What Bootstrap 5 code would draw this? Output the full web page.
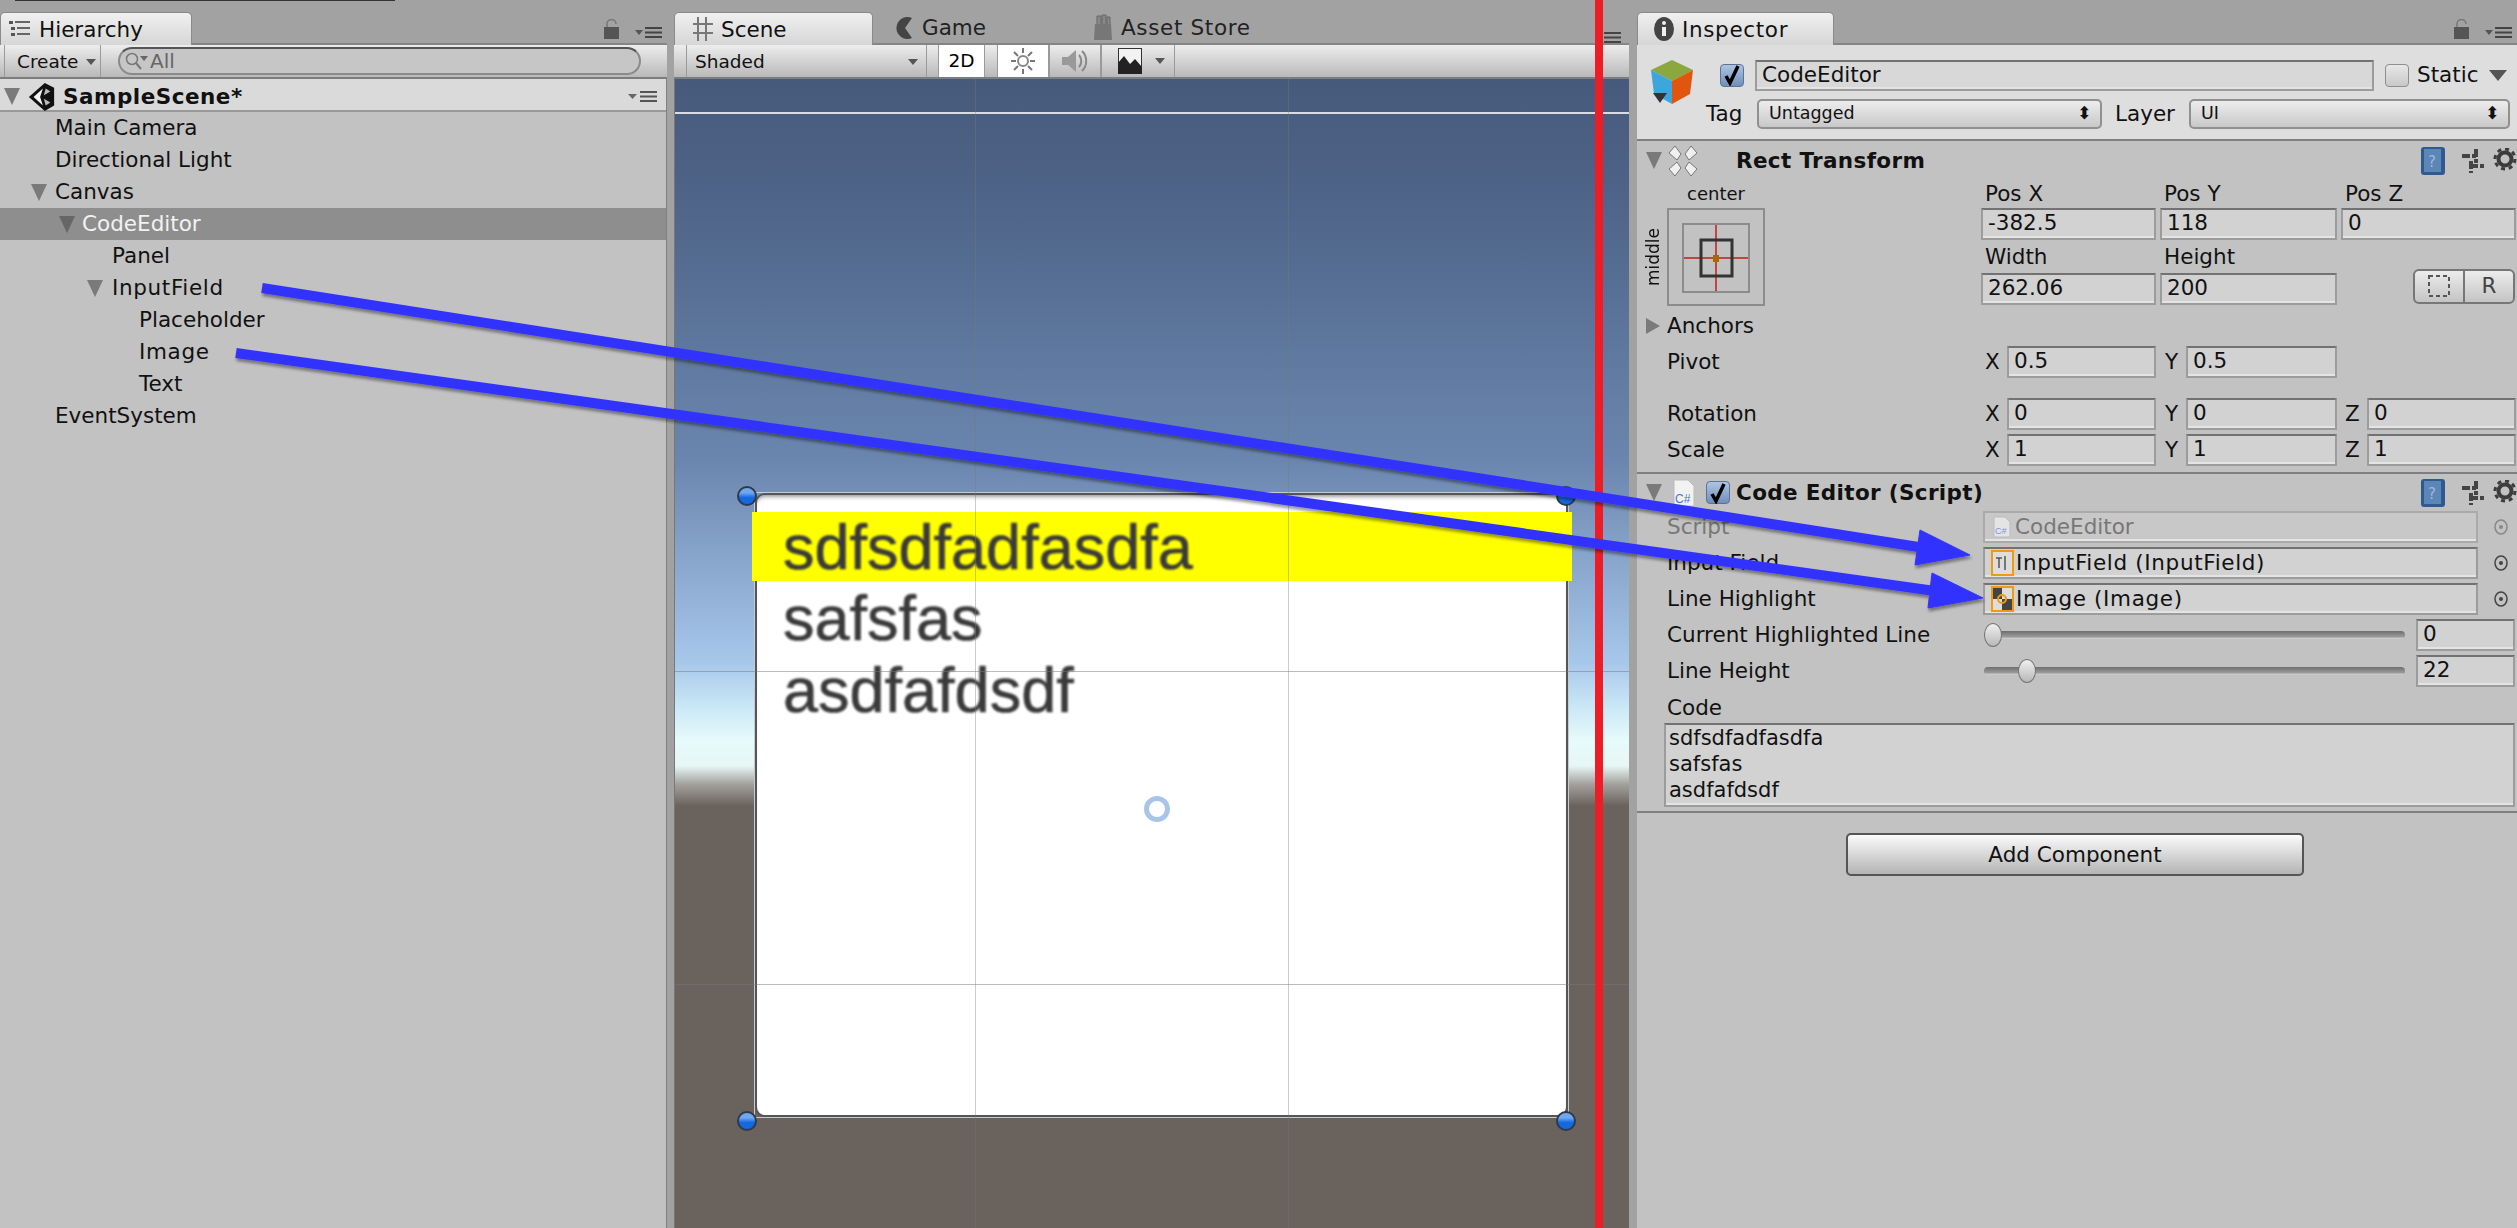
<!DOCTYPE html>
<html lang="en">
<head>
  <meta charset="UTF-8">
  <title>Unity Editor</title>
  <link href="https://cdn.jsdelivr.net/npm/bootstrap@5.3.0/dist/css/bootstrap.min.css" rel="stylesheet">
  <style>
    html, body { margin: 0; width: 2517px; height: 1228px; overflow: hidden; }
    body { background: #a2a2a2; font-family: "DejaVu Sans", Verdana, sans-serif; font-size: 21.5px; color: #111; position: relative; }
    svg { display: block; flex: none; }

    .editor { width: 2517px; height: 1228px; }
    .dock-left { width: 667px; }
    .dock-mid { width: 955px; margin-left: 7px; }
    .dock-right { width: 880px; margin-left: 8px; }
    .dock-left, .dock-mid, .dock-right { height: 1228px; }

    .tab-strip { height: 45px; padding-top: 12px; border-bottom: 2px solid #858585; }
    .dock-tab { height: 33px; background: linear-gradient(#f0f0f0, #d6d6d6); border: 1px solid #8a8a8a; border-bottom: 0; border-radius: 5px 5px 0 0; line-height: 31px; }
    .dock-tab-off { height: 32px; line-height: 32px; color: #222; }

    .tool-bar { height: 34px; background: linear-gradient(#ededed, #b9b9b9); border-bottom: 2px solid #7d7d7d; }
    .tool-cell { height: 32px; padding-top: 2px; border-left: 1px solid #9a9a9a; border-right: 1px solid #9a9a9a; line-height: 28px; font-size: 18.5px; }
    .tool-white { background: #fff; }
    .drop-mark { width: 0; height: 0; border-left: 5px solid transparent; border-right: 5px solid transparent; border-top: 6px solid #555; }

    .hier-panel { background: #c2c2c2; height: 1149px; border-right: 1px solid #808080; }
    .search-pill { width: 523px; height: 28px; margin: 2px 0 0 17px; border: 2px solid #8a8a8a; border-top-color: #555; border-radius: 14px; background: #c6c6c6; color: #666; line-height: 22px; font-size: 20px; }
    .scene-head { height: 33px; padding-top: 4px; background: #dadada; border-bottom: 2px solid #999; font-weight: 700; letter-spacing: .5px; line-height: 28px; }
    .hier-row { height: 32px; line-height: 32px; color: #111; white-space: nowrap; }
    .hier-on { background: #8e8e8e; color: #f2f2f2; }
    .fold-down { width: 0; height: 0; border-left: 8px solid transparent; border-right: 8px solid transparent; border-top: 17px solid #7a7a7a; flex: none; }
    .fold-right { width: 0; height: 0; border-top: 8px solid transparent; border-bottom: 8px solid transparent; border-left: 14px solid #7a7a7a; flex: none; }
    .ind-0 { padding-left: 55px; }
    .ind-1 { padding-left: 31px; }
    .ind-2 { padding-left: 59px; }
    .ind-3 { padding-left: 112px; }
    .ind-4 { padding-left: 87px; }
    .ind-5 { padding-left: 139px; }
    .wide-i { letter-spacing: .65px; }

    .scene-view { height: 1149px; position: relative; overflow: hidden; border-left: 1px solid #777;
      background: linear-gradient(180deg, #465a7b 0, #4e6488 120px, #6b86ae 382px, #a6c6ea 582px, #cdeaf7 632px, #e6fbfb 662px, #e6f6f4 687px, #a4a29e 705px, #6a625c 727px, #6a625c 100%); }
    .grid-h { position: absolute; left: 0; right: 0; height: 1px; background: rgba(120,120,120,.5); z-index: 2; }
    .grid-v { position: absolute; top: 0; bottom: 0; width: 1px; background: rgba(120,120,120,.38); z-index: 2; }
    .horizon-line { position: absolute; left: 0; right: 0; top: 33px; height: 2px; background: #d8dde4; }
    .ui-panel { position: absolute; left: 79px; top: 413px; width: 815px; height: 626px; border: 1px solid #c8ccd0; }
    .ui-panel-in { height: 100%; background: #fff; border: 2px solid #555; border-radius: 10px; padding-top: 17px; box-shadow: inset 0 5px 5px -4px #777; }
    .code-hi { height: 69px; margin: 0 -6px 0 -5px; padding-left: 31px; background: #ff0; line-height: 70px; }
    .code-line { height: 72px; padding-left: 26px; line-height: 74px; }
    .code-hi, .code-line { font-family: "Liberation Sans", Arial, sans-serif; font-size: 63px; color: #3a3a3a; }
    .soft-text { display: inline-block; filter: blur(1px); -webkit-text-stroke: .6px #3a3a3a; }
    .rect-handle { position: absolute; width: 20px; height: 20px; border-radius: 50%; background: linear-gradient(#6ea8f0 30%, #1468e0 60%); border: 2px solid #2e3a4a; z-index: 3; }
    .caret-ring { position: absolute; left: 469px; top: 717px; width: 26px; height: 26px; border: 5px solid #a8c4e8; border-radius: 50%; z-index: 3; filter: blur(.5px); }

    .insp-head { height: 96px; background: #dedede; border-bottom: 2px solid #7f7f7f; padding: 15px 0 0 13px; }
    .insp-body { background: #c2c2c2; height: 1087px; }
    .u-field { height: 32px; background: #d2d2d2; border: 2px solid #9c9c9c; border-top-color: #727272; box-shadow: inset 0 -2px 0 #e4e4e4; line-height: 26px; padding-left: 5px; color: #111; white-space: nowrap; overflow: hidden; }
    .u-popup { height: 30px; background: linear-gradient(#ededed, #c8c8c8); border: 2px solid #909090; border-radius: 5px; line-height: 25px; padding-left: 10px; font-size: 17.5px; }
    .u-check { width: 24px; height: 23px; border: 1px solid #8f8f8f; border-radius: 4px; background: linear-gradient(#e8e8e8, #c8c8c8); flex: none; }
    .u-check-on { background: linear-gradient(#b0c4e0, #6f8fbb); border-color: #5b7396; }
    .comp-title { font-weight: 700; letter-spacing: .35px; line-height: 37px; }
    .comp-end { border-bottom: 2px solid #7f7f7f; }
    .rect-block { height: 333px; }
    .left-label { width: 344px; padding-left: 30px; }
    .w-175 { width: 175px; }
    .w-177 { width: 177px; }
    .w-149 { width: 149px; }
    .w-151 { width: 151px; }
    .axis { width: 26px; padding-left: 4px; }
    .field-row { height: 32px; line-height: 32px; }
    .cap-row { height: 33px; line-height: 33px; }
    .anchor-box { width: 98px; height: 98px; border: 2px solid #8c8c8c; padding: 13px; }
    .anchor-in { width: 68px; height: 70px; border: 2px solid #8c8c8c; }
    .anchor-cap { width: 98px; height: 28px; line-height: 28px; font-size: 18px; text-align: center; }
    .side-word { writing-mode: vertical-rl; transform: rotate(180deg); font-size: 17px; width: 22px; margin-left: -25px; margin-right: 3px; text-align: center; line-height: 22px; }
    .mini-btn { width: 51px; height: 35px; background: linear-gradient(#ececec, #c4c4c4); border: 2px solid #777; line-height: 30px; text-align: center; color: #444; }
    .obj-row { height: 32px; line-height: 32px; margin-bottom: 4px; }
    .ghost { color: #777; }
    .slide-wrap { width: 421px; margin-right: 11px; position: relative; height: 32px; }
    .slide-track { position: absolute; left: 0; right: 0; top: 12px; height: 8px; background: linear-gradient(#6e6e6e, #999 70%, #d8d8d8); border-radius: 4px; }
    .slide-thumb { position: absolute; top: 4px; width: 18px; height: 24px; background: linear-gradient(#f0f0f0, #b8b8b8); border: 1px solid #777; border-radius: 50%; }
    .thumb-a { left: 0; }
    .thumb-b { left: 34px; }
    .code-cap { padding-left: 30px; height: 32px; line-height: 34px; }
    .code-area { height: 84px; margin: 0 2px 0 27px; background: #d2d2d2; border: 2px solid #9c9c9c; border-top-color: #727272; box-shadow: inset 0 -2px 0 #e4e4e4; padding: 0 3px; line-height: 26px; font-size: 21px; }
    .add-wrap { padding-top: 20px; padding-left: 209px; }
    .btn.add-btn { width: 458px; height: 43px; padding: 0; border: 2px solid #555; border-radius: 5px; background: linear-gradient(#fbfbfb, #b4b4b4); color: #111; font-size: 21.5px; line-height: 38px; }

    .paint-layer { position: absolute; left: 0; top: 0; z-index: 10; pointer-events: none; }
  </style>
</head>
<body>
  <div class="editor d-flex">

    <!-- hierarchy -->
    <div class="dock-left">
      <div class="tab-strip d-flex justify-content-between">
        <div class="dock-tab d-flex align-items-center gap-2 ps-2" style="width:192px">
          <svg width="22" height="18" viewBox="0 0 22 18"><g fill="#555"><rect x="0" y="1" width="4" height="3"/><rect x="2" y="7" width="4" height="3"/><rect x="2" y="13" width="4" height="3"/></g><g fill="#666"><rect x="6" y="1" width="15" height="2"/><rect x="8" y="7" width="13" height="2"/><rect x="8" y="13" width="13" height="2"/></g></svg>
          <span>Hierarchy</span>
        </div>
        <div class="d-flex align-items-end gap-3 pe-1 pb-1">
          <svg width="15" height="20" viewBox="0 0 15 20"><path d="M3 9V5a4.500 4.500 0 0 1 9 0" fill="none" stroke="#777" stroke-width="1.500"/><rect x="0" y="8" width="15" height="12" fill="#555"/></svg>
          <svg width="28" height="12" viewBox="0 0 28 12"><path d="M0 3h8l-4 5z" fill="#555"/><path d="M10 1h17M10 5.500h17M10 10h17" stroke="#444" stroke-width="2"/></svg>
        </div>
      </div>
      <div class="tool-bar d-flex">
        <div class="tool-cell d-flex align-items-center gap-2 ms-1" style="width:97px;padding-left:12px">Create <span class="drop-mark"></span></div>
        <div class="search-pill d-flex align-items-center ps-1">
          <svg width="26" height="22" viewBox="0 0 26 22"><circle cx="8" cy="9" r="5.500" fill="none" stroke="#777" stroke-width="1.500"/><path d="M12 13l5 6" stroke="#777" stroke-width="2"/><path d="M16 6h8l-4 5z" fill="#666"/></svg>
          <span>All</span>
        </div>
      </div>
      <div class="hier-panel">
        <div class="scene-head d-flex align-items-center ps-1">
          <span class="fold-down me-2"></span>
          <svg class="me-2" width="27" height="28" viewBox="0 0 27 30"><path d="M17 0l10 5v19l-10 6L0 15z" fill="#111"/><path d="M5 15L15 6l-3 9 3 9z" fill="#f4f4f4"/><path d="M18 6l5 3-7 4zM18 24l5-3-7-4z" fill="#bcbcbc"/></svg>
          <span class="flex-grow-1">SampleScene*</span>
          <svg class="me-2" width="30" height="12" viewBox="0 0 30 12"><path d="M0 3h9l-4.500 5z" fill="#666"/><path d="M12 1h17M12 5.500h17M12 10h17" stroke="#555" stroke-width="2"/></svg>
        </div>
        <div class="hier-row ind-0">Main Camera</div>
        <div class="hier-row ind-0">Directional Light</div>
        <div class="hier-row ind-1 d-flex align-items-center gap-1"><span class="fold-down me-1"></span><span>Canvas</span></div>
        <div class="hier-row hier-on ind-2 d-flex align-items-center"><span class="fold-down" style="margin-right:7px;border-top-color:#666"></span><span>CodeEditor</span></div>
        <div class="hier-row ind-3">Panel</div>
        <div class="hier-row ind-4 d-flex align-items-center"><span class="fold-down" style="margin-right:9px"></span><span class="wide-i">InputField</span></div>
        <div class="hier-row ind-5">Placeholder</div>
        <div class="hier-row ind-5 wide-i">Image</div>
        <div class="hier-row ind-5">Text</div>
        <div class="hier-row ind-0">EventSystem</div>
      </div>
    </div>

    <!-- scene -->
    <div class="dock-mid">
      <div class="tab-strip d-flex align-items-start">
        <div class="dock-tab d-flex align-items-center" style="width:199px;padding-left:17px;gap:7px">
          <svg width="22" height="26" viewBox="0 0 22 26"><path d="M6 1v24M14 1v24M1 8h20M1 17h20" stroke="#777" stroke-width="2"/></svg>
          <span>Scene</span>
        </div>
        <div class="dock-tab-off d-flex align-items-center gap-2" style="margin-left:23px;width:197px">
          <svg width="18" height="26" viewBox="0 0 18 26"><path d="M16 3a11 11 0 1 0 0 20l-7-10z" fill="#444"/></svg>
          <span>Game</span>
        </div>
        <div class="dock-tab-off d-flex align-items-center gap-2">
          <svg width="20" height="28" viewBox="0 0 20 28"><path d="M2 10h16l1 16H1z" fill="#777"/><path d="M4 10V2h4v8M9 10V1h4v9M14 10V3h3v7" fill="#888" stroke="#666"/></svg>
          <span class="wide-i">Asset Store</span>
        </div>
        <svg class="ms-auto" style="margin:20px 7px 0 0" width="18" height="12" viewBox="0 0 18 12"><path d="M0 1h17M0 5.500h17M0 10h17" stroke="#444" stroke-width="2"/></svg>
      </div>
      <div class="tool-bar d-flex">
        <div class="tool-cell d-flex align-items-center justify-content-between px-2" style="width:241px;margin-left:12px"><span>Shaded</span><span class="drop-mark"></span></div>
        <div class="tool-cell tool-white text-center text-black" style="width:47px;margin-left:11px">2D</div>
        <div class="tool-cell tool-white d-flex align-items-center justify-content-center" style="width:52px;margin-left:12px;padding-top:0">
          <svg width="26" height="28" viewBox="0 0 26 28"><circle cx="13" cy="14" r="5" fill="none" stroke="#888" stroke-width="2"/><path d="M13 1v5M13 22v5M1 14h5M20 14h5M4 5l4 4M18 19l4 4M22 5l-4 4M8 19l-4 4" stroke="#777" stroke-width="2"/></svg>
        </div>
        <div class="tool-cell d-flex align-items-center justify-content-center" style="width:52px;padding-top:0">
          <svg width="28" height="28" viewBox="0 0 28 28"><path d="M1 10h6l8-7v22l-8-7H1z" fill="#999"/><path d="M18 8a9 9 0 0 1 0 12M21 4a14 14 0 0 1 0 20" fill="none" stroke="#888" stroke-width="2"/></svg>
        </div>
        <div class="tool-cell d-flex align-items-center ps-3" style="width:74px;padding-top:0">
          <svg width="24" height="26" viewBox="0 0 24 26"><rect width="24" height="26" fill="#f2f2f2" stroke="#333" stroke-width="2"/><path d="M0 26V15l6-7 6 8 5-5 7 8v7z" fill="#222"/></svg>
          <span class="drop-mark" style="margin-left:13px"></span>
        </div>
      </div>
      <div class="scene-view">
        <div class="horizon-line"></div>
        <div class="grid-v" style="left:300px"></div>
        <div class="grid-v" style="left:613px"></div>
        <div class="grid-h" style="top:592px"></div>
        <div class="grid-h" style="top:905px"></div>
        <div class="ui-panel">
          <div class="ui-panel-in">
            <div class="code-hi"><span class="soft-text">sdfsdfadfasdfa</span></div>
            <div class="code-line"><span class="soft-text">safsfas</span></div>
            <div class="code-line"><span class="soft-text">asdfafdsdf</span></div>
          </div>
        </div>
        <span class="rect-handle" style="left:62px;top:407px"></span>
        <span class="rect-handle" style="left:881px;top:407px"></span>
        <span class="rect-handle" style="left:62px;top:1032px"></span>
        <span class="rect-handle" style="left:881px;top:1032px"></span>
        <span class="caret-ring"></span>
      </div>
    </div>

    <!-- inspector -->
    <div class="dock-right">
      <div class="tab-strip d-flex justify-content-between">
        <div class="dock-tab d-flex align-items-center gap-2 ps-3" style="width:197px">
          <svg width="20" height="24" viewBox="0 0 20 24"><ellipse cx="10" cy="12" rx="10" ry="12" fill="#444"/><circle cx="10" cy="6" r="2" fill="#eee"/><rect x="8" y="10" width="4" height="9" fill="#eee"/></svg>
          <span class="wide-i">Inspector</span>
        </div>
        <div class="d-flex align-items-end gap-3 pe-1 pb-1">
          <svg width="15" height="20" viewBox="0 0 15 20"><path d="M3 9V5a4.500 4.500 0 0 1 9 0" fill="none" stroke="#777" stroke-width="1.500"/><rect x="0" y="8" width="15" height="12" fill="#555"/></svg>
          <svg width="28" height="12" viewBox="0 0 28 12"><path d="M0 3h8l-4 5z" fill="#555"/><path d="M10 1h17M10 5.500h17M10 10h17" stroke="#444" stroke-width="2"/></svg>
        </div>
      </div>
      <div class="insp-head d-flex">
        <svg width="44" height="44" viewBox="0 0 44 44" class="me-4"><path d="M22 0l21 10-21 11L1 10z" fill="#8aa83e"/><path d="M1 10l21 11v23L4 34z" fill="#3ea6dc"/><path d="M43 10L22 21v23l18-10z" fill="#e0560e"/><path d="M3 33h14l-7 10z" fill="#333"/></svg>
        <div class="flex-grow-1">
          <div class="d-flex align-items-center" style="height:30px">
            <span class="u-check u-check-on d-flex align-items-center justify-content-center" style="margin-left:2px">
              <svg width="18" height="22" viewBox="0 0 18 22"><path d="M3 12l4 7L15 2" fill="none" stroke="#000" stroke-width="3.500"/></svg>
            </span>
            <div class="u-field" style="width:619px;height:31px;margin-left:11px;background:#d8d8d8">CodeEditor</div>
            <span class="u-check" style="margin-left:11px"></span>
            <span class="ms-2">Static</span>
            <span style="margin-left:11px;width:0;height:0;border-left:9px solid transparent;border-right:9px solid transparent;border-top:11px solid #555"></span>
          </div>
          <div class="d-flex align-items-center" style="margin-top:9px;height:30px">
            <span style="margin-left:-12px;width:42px">Tag</span>
            <div class="u-popup d-flex justify-content-between" style="width:345px;margin-left:9px"><span>Untagged</span><span class="pe-2">⬍</span></div>
            <span style="margin-left:13px;width:60px">Layer</span>
            <div class="u-popup d-flex justify-content-between" style="width:321px;margin-left:14px"><span>UI</span><span class="pe-2">⬍</span></div>
          </div>
        </div>
      </div>

      <div class="insp-body">
        <div class="rect-block comp-end">
          <div class="d-flex align-items-center" style="height:39px;padding-left:9px">
            <span class="fold-down" style="margin-right:4px"></span>
            <svg width="34" height="32" viewBox="0 0 34 32"><g fill="#f0f0f0" stroke="#777"><path d="M9 1l6 8-4 6-8-7z"/><path d="M25 1l-6 8 4 6 8-7z"/><path d="M9 31l6-8-4-6-8 7z"/><path d="M25 31l-6-8 4-6 8 7z"/></g></svg>
            <span class="comp-title flex-grow-1" style="margin-left:36px">Rect Transform</span>
            <svg class="me-2" width="26" height="30" viewBox="0 0 26 30"><rect x="1" y="1" width="24" height="28" rx="3" fill="#2f5a90"/><rect x="4" y="3" width="17" height="23" fill="#5d86b8"/><text x="8" y="21" font-size="15" fill="#9db8d8">?</text></svg>
            <svg class="ms-2" width="22" height="26" viewBox="0 0 22 26"><path d="M0 8h14M8 18h14M14 1v14M9 13v12" stroke="#444" stroke-width="4" stroke-dasharray="8 2"/></svg>
            <svg class="ms-2" width="25" height="26" viewBox="0 0 25 26"><circle cx="13" cy="11" r="6.500" fill="none" stroke="#3c3c3c" stroke-width="4"/><circle cx="13" cy="11" r="10" fill="none" stroke="#3c3c3c" stroke-width="3" stroke-dasharray="4 3.800"/></svg>
          </div>
          <div class="d-flex">
            <div class="left-label">
              <div class="anchor-cap">center</div>
              <div class="d-flex align-items-center">
                <span class="side-word">middle</span>
                <div class="anchor-box">
                  <div class="anchor-in">
                    <svg width="64" height="66" viewBox="0 0 64 66"><path d="M32 0v66M0 33h64" stroke="#c04545" stroke-width="2"/><rect x="17" y="15" width="31" height="36" fill="none" stroke="#333" stroke-width="3"/><rect x="29" y="30" width="6" height="7" fill="#a86a00"/></svg>
                  </div>
                </div>
              </div>
            </div>
            <div>
              <div class="d-flex" style="height:28px;line-height:28px"><span class="w-175 ps-1" style="margin-right:4px">Pos X</span><span class="w-177 ps-1" style="margin-right:4px">Pos Y</span><span class="ps-1">Pos Z</span></div>
              <div class="d-flex gap-1 field-row"><div class="u-field w-175">-382.5</div><div class="u-field w-177">118</div><div class="u-field w-175">0</div></div>
              <div class="d-flex cap-row"><span class="w-175 ps-1" style="margin-right:4px">Width</span><span class="w-177 ps-1">Height</span></div>
              <div class="d-flex gap-1 field-row">
                <div class="u-field w-175">262.06</div><div class="u-field w-177">200</div>
                <div class="d-flex" style="margin:-4px 0 0 72px;width:102px"><span class="mini-btn" style="border-radius:6px 0 0 6px;border-right-width:1px">
                  <svg class="m-auto mt-1" width="22" height="22" viewBox="0 0 22 22"><rect x="1" y="1" width="20" height="20" fill="none" stroke="#555" stroke-width="2" stroke-dasharray="4 3"/></svg></span><span class="mini-btn" style="border-radius:0 6px 6px 0;border-left-width:1px">R</span></div>
              </div>
            </div>
          </div>
          <div class="d-flex align-items-center" style="height:30px;margin-top:5px;padding-left:9px"><span class="fold-right" style="margin-right:7px"></span><span>Anchors</span></div>
          <div class="d-flex field-row" style="margin-top:5px">
            <span class="left-label">Pivot</span><span class="axis">X</span><div class="u-field w-149">0.5</div><span class="axis" style="width:30px;padding-left:9px">Y</span><div class="u-field w-151">0.5</div>
          </div>
          <div class="d-flex field-row" style="margin-top:20px">
            <span class="left-label">Rotation</span><span class="axis">X</span><div class="u-field w-149">0</div><span class="axis" style="width:30px;padding-left:9px">Y</span><div class="u-field w-151">0</div><span class="axis" style="width:30px;padding-left:8px">Z</span><div class="u-field w-149">0</div>
          </div>
          <div class="d-flex field-row" style="margin-top:4px">
            <span class="left-label">Scale</span><span class="axis">X</span><div class="u-field w-149">1</div><span class="axis" style="width:30px;padding-left:9px">Y</span><div class="u-field w-151">1</div><span class="axis" style="width:30px;padding-left:8px">Z</span><div class="u-field w-149">1</div>
          </div>
        </div>

        <div class="comp-end" style="height:339px">
          <div class="d-flex align-items-center" style="height:37px;padding-left:9px">
            <span class="fold-down" style="margin-right:11px"></span>
            <svg width="22" height="28" viewBox="0 0 22 28"><path d="M1 1h14l6 6v20H1z" fill="#f2f2f2" stroke="#bbb"/><text x="2" y="24" font-size="12" fill="#4477cc" font-family="Liberation Sans, sans-serif">C#</text></svg>
            <span class="u-check u-check-on d-flex align-items-center justify-content-center" style="margin-left:11px;margin-right:6px">
              <svg width="18" height="22" viewBox="0 0 18 22"><path d="M3 12l4 7L15 2" fill="none" stroke="#000" stroke-width="3.500"/></svg>
            </span>
            <span class="comp-title flex-grow-1">Code Editor (Script)</span>
            <svg class="me-2" width="26" height="30" viewBox="0 0 26 30"><rect x="1" y="1" width="24" height="28" rx="3" fill="#2f5a90"/><rect x="4" y="3" width="17" height="23" fill="#5d86b8"/><text x="8" y="21" font-size="15" fill="#9db8d8">?</text></svg>
            <svg class="ms-2" width="22" height="26" viewBox="0 0 22 26"><path d="M0 8h14M8 18h14M14 1v14M9 13v12" stroke="#444" stroke-width="4" stroke-dasharray="8 2"/></svg>
            <svg class="ms-2" width="25" height="26" viewBox="0 0 25 26"><circle cx="13" cy="11" r="6.500" fill="none" stroke="#3c3c3c" stroke-width="4"/><circle cx="13" cy="11" r="10" fill="none" stroke="#3c3c3c" stroke-width="3" stroke-dasharray="4 3.800"/></svg>
          </div>
          <div class="d-flex obj-row">
            <span class="left-label ghost" style="width:346px">Script</span>
            <div class="u-field d-flex align-items-center gap-1 ghost" style="width:495px;background:#c8c8c8;border-color:#aaa">
              <svg width="18" height="22" viewBox="0 0 18 22" style="margin-left:3px"><path d="M1 1h11l5 5v15H1z" fill="#e4e4e4" stroke="#bbb"/><text x="2" y="18" font-size="9" fill="#7d9ad0" font-family="Liberation Sans, sans-serif">C#</text></svg>
              <span>CodeEditor</span>
            </div>
            <svg class="ms-3 mt-2" width="14" height="16" viewBox="0 0 14 16"><ellipse cx="7" cy="8" rx="6" ry="7" fill="none" stroke="#888" stroke-width="1.500"/><circle cx="7" cy="8" r="2" fill="#888"/></svg>
          </div>
          <div class="d-flex obj-row">
            <span class="left-label" style="width:346px">Input Field</span>
            <div class="u-field d-flex align-items-center" style="width:495px;gap:2px">
              <svg width="23" height="26" viewBox="0 0 23 26" style="margin-left:1px"><rect x="1" y="1" width="21" height="24" fill="#ddd" stroke="#f09a10" stroke-width="2"/><path d="M5 8h6M8 8v10M14 6v14" stroke="#555" stroke-width="1.500"/></svg>
              <span class="wide-i">InputField (InputField)</span>
            </div>
            <svg class="ms-3 mt-2" width="14" height="16" viewBox="0 0 14 16"><ellipse cx="7" cy="8" rx="6" ry="7" fill="none" stroke="#444" stroke-width="1.500"/><circle cx="7" cy="8" r="2" fill="#444"/></svg>
          </div>
          <div class="d-flex obj-row">
            <span class="left-label" style="width:346px">Line Highlight</span>
            <div class="u-field d-flex align-items-center" style="width:495px;gap:2px">
              <svg width="23" height="26" viewBox="0 0 23 26" style="margin-left:1px"><rect x="1" y="1" width="21" height="24" fill="#ddd"/><path d="M1 1h10v12H1zM11 13h11v12H11z" fill="#444"/><rect x="1" y="1" width="21" height="24" fill="none" stroke="#f09a10" stroke-width="2"/><circle cx="11" cy="13" r="4" fill="none" stroke="#f09a10" stroke-width="2"/></svg>
              <span class="wide-i">Image (Image)</span>
            </div>
            <svg class="ms-3 mt-2" width="14" height="16" viewBox="0 0 14 16"><ellipse cx="7" cy="8" rx="6" ry="7" fill="none" stroke="#444" stroke-width="1.500"/><circle cx="7" cy="8" r="2" fill="#444"/></svg>
          </div>
          <div class="d-flex obj-row">
            <span class="left-label" style="width:347px">Current Highlighted Line</span>
            <div class="slide-wrap"><span class="slide-track"></span><span class="slide-thumb thumb-a"></span></div>
            <div class="u-field" style="width:99px">0</div>
          </div>
          <div class="d-flex obj-row">
            <span class="left-label" style="width:347px">Line Height</span>
            <div class="slide-wrap"><span class="slide-track"></span><span class="slide-thumb thumb-b"></span></div>
            <div class="u-field" style="width:99px">22</div>
          </div>
          <div class="code-cap">Code</div>
          <div class="code-area">sdfsdfadfasdfa<br>safsfas<br>asdfafdsdf</div>
        </div>

        <div class="add-wrap"><button type="button" class="btn add-btn">Add Component</button></div>
      </div>
    </div>
  </div>

  <!-- hand drawn marks on top of the screenshot -->
  <svg class="paint-layer" width="2517" height="1228" viewBox="0 0 2517 1228">
    <defs><filter id="arrowShade" x="-5%" y="-20%" width="110%" height="140%"><feDropShadow dx="1" dy="3" stdDeviation="1.500" flood-color="#000" flood-opacity=".4"/></filter></defs>
    <rect x="15" y="0" width="380" height="1" fill="#333"/>
    <rect x="1595" y="0" width="8" height="1228" fill="#ee1c25"/>
    <g fill="#3333ff" stroke="#3333ff" filter="url(#arrowShade)">
      <path d="M262 288L1925 548" stroke-width="10"/>
      <path d="M1920 530L1970 555 1915 565z" stroke-width="1"/>
      <path d="M236 353L1935 591" stroke-width="10"/>
      <path d="M1932 573L1983 598 1928 608z" stroke-width="1"/>
    </g>
  </svg>

  <script src="https://cdn.jsdelivr.net/npm/bootstrap@5.3.0/dist/js/bootstrap.bundle.min.js"></script>
</body>
</html>
